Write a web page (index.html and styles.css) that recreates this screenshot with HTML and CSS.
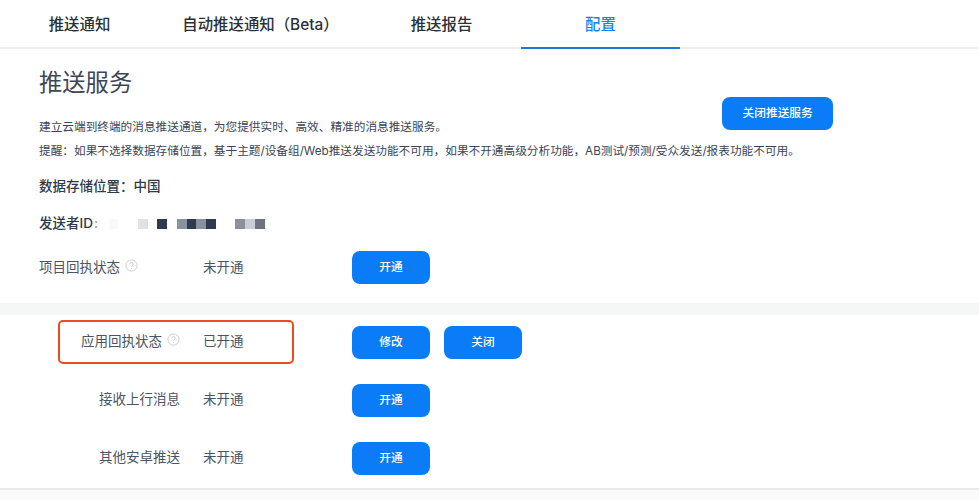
FILE: index.html
```html
<!DOCTYPE html>
<html lang="zh-CN">
<head>
  <meta charset="utf-8">
  <title>推送服务配置</title>
  <link rel="stylesheet" href="styles.css">
</head>
<body>

<nav class="tabs">
  <a class="tab">推送通知</a>
  <a class="tab">自动推送通知（Beta）</a>
  <a class="tab">推送报告</a>
  <a class="tab active">配置</a>
</nav>

<section class="service">
  <div class="service-head">
    <h2>推送服务</h2>
    <a class="button wide">关闭推送服务</a>
  </div>
  <p class="intro">建立云端到终端的消息推送通道，为您提供实时、高效、精准的消息推送服务。</p>
  <p class="intro">提醒：如果不选择数据存储位置，基于主题/设备组/Web推送发送功能不可用，如果不开通高级分析功能，AB测试/预测/受众发送/报表功能不可用。</p>
  <p class="fact location">数据存储位置：中国</p>
  <div class="fact sender">
    <span>发送者ID<span class="colon">:</span></span>
    <div class="mosaic">
      <i class="c0"></i><i></i><i></i><i class="c1"></i><i></i><i class="c3"></i><i></i><i class="c2"></i><i class="c3"></i><i class="c2"></i><i class="c3"></i><i></i><i></i><i class="c2"></i><i class="c4"></i><i class="c5"></i>
    </div>
  </div>
  <div class="row top">
    <div class="label">项目回执状态
      <svg class="help" viewBox="0 0 14 14"><circle cx="7" cy="7" r="6"/><path d="M5.2 5.6a1.8 1.8 0 1 1 2.8 1.5c-.7.4-1 .8-1 1.5M7 9.9v1"/></svg>
    </div>
    <div class="status">未开通</div>
    <div class="actions"><a class="button">开通</a></div>
  </div>
</section>

<div class="band"></div>

<section class="receipts">
  <div class="row highlighted">
    <div class="label">应用回执状态
      <svg class="help" viewBox="0 0 14 14"><circle cx="7" cy="7" r="6"/><path d="M5.2 5.6a1.8 1.8 0 1 1 2.8 1.5c-.7.4-1 .8-1 1.5M7 9.9v1"/></svg>
    </div>
    <div class="status">已开通</div>
    <div class="actions"><a class="button">修改</a><a class="button">关闭</a></div>
  </div>
  <div class="row">
    <div class="label">接收上行消息</div>
    <div class="status">未开通</div>
    <div class="actions"><a class="button">开通</a></div>
  </div>
  <div class="row">
    <div class="label">其他安卓推送</div>
    <div class="status">未开通</div>
    <div class="actions"><a class="button">开通</a></div>
  </div>
</section>

<div class="foot"></div>

</body>
</html>
```
FILE: styles.css
```css
html, body {
  margin: 0;
  height: 500px;
  overflow: hidden;
}

body {
  background: #fff;
  color: #3a4557;
  font-family: Inter, "Noto Sans CJK SC", sans-serif;
  font-size: 13.5px;
}

.tabs {
  display: grid;
  grid-template-columns: 159px 203px 159px 159px;
  height: 47px;
  border-bottom: 2px solid #eeeff2;
}

.tab {
  height: 49px;
  line-height: 49px;
  text-align: center;
  font-size: 15.4px;
  font-weight: 500;
  color: #2b2f36;
  box-sizing: border-box;
}

.tab.active {
  color: #1a7fe8;
  border-bottom: 2px solid #1f78d8;
}

.service {
  padding: 0 0 0 39px;
}

.service-head {
  display: flex;
  height: 66px;
}

.service-head h2 {
  margin: 17px 0 0;
  font-size: 23.3px;
  line-height: 34px;
  font-weight: 400;
  color: #3d4655;
}

.button {
  display: block;
  width: 78px;
  height: 33px;
  line-height: 33px;
  border-radius: 8px;
  background: #0a7cf7;
  color: #fff;
  text-align: center;
  font-size: 11.7px;
  font-weight: 500;
}

.button.wide {
  width: 111px;
  margin: 48px 0 0 590px;
}

.intro {
  margin: 0;
  font-size: 11.66px;
  line-height: 24px;
  color: #3a4557;
  white-space: nowrap;
}

.fact {
  margin: 0;
  color: #2e3949;
  font-size: 13.5px;
  font-weight: 500;
}

.location {
  margin-top: 11px;
  line-height: 24px;
}

.sender {
  display: flex;
  margin-top: 13px;
  height: 24px;
  line-height: 24px;
  position: relative;
}

.colon {
  color: #9aa1ad;
  margin-left: 1px;
}

.mosaic {
  display: flex;
  position: absolute;
  left: 69.5px;
  top: 8px;
}

.mosaic i {
  display: block;
  width: 9.75px;
  height: 10px;
}

.mosaic .c0 { background: #f7f8f9; }
.mosaic .c1 { background: #dfe1e5; }
.mosaic .c2 { background: #8b919c; }
.mosaic .c3 { background: #2d3a50; }
.mosaic .c4 { background: #c9cdd6; }
.mosaic .c5 { background: #6c7480; }

.row {
  display: grid;
  grid-template-columns: 164px 149px auto;
  align-items: center;
  height: 33px;
  font-size: 13.5px;
  color: #4a5464;
}

.row.top {
  margin-top: 16px;
}

.label, .status {
  padding-bottom: 4px;
}

.receipts .label, .receipts .status {
  padding-bottom: 6px;
}

.label {
  display: flex;
  align-items: center;
  white-space: nowrap;
}

.help {
  width: 13px;
  height: 13px;
  margin-left: 5px;
  fill: none;
  stroke: #c6c9ce;
  stroke-width: 1;
}

.actions {
  display: flex;
  gap: 14px;
}

.band {
  height: 12px;
  margin-top: 19px;
  background: #f5f7f7;
}

.receipts {
  padding: 11px 0 0 39px;
}

.receipts .row {
  margin-bottom: 25px;
}

.receipts .label {
  justify-content: flex-end;
  padding-right: 23px;
}

.highlighted {
  position: relative;
}

.highlighted::after {
  content: "";
  position: absolute;
  left: 19px;
  top: -6px;
  width: 232px;
  height: 40px;
  border: 2.5px solid #ee4a1f;
  border-radius: 5px;
}

.foot {
  height: 12px;
  margin-top: -12px;
  border-top: 2px solid #e8e9ea;
  background: #fafafa;
}
```
